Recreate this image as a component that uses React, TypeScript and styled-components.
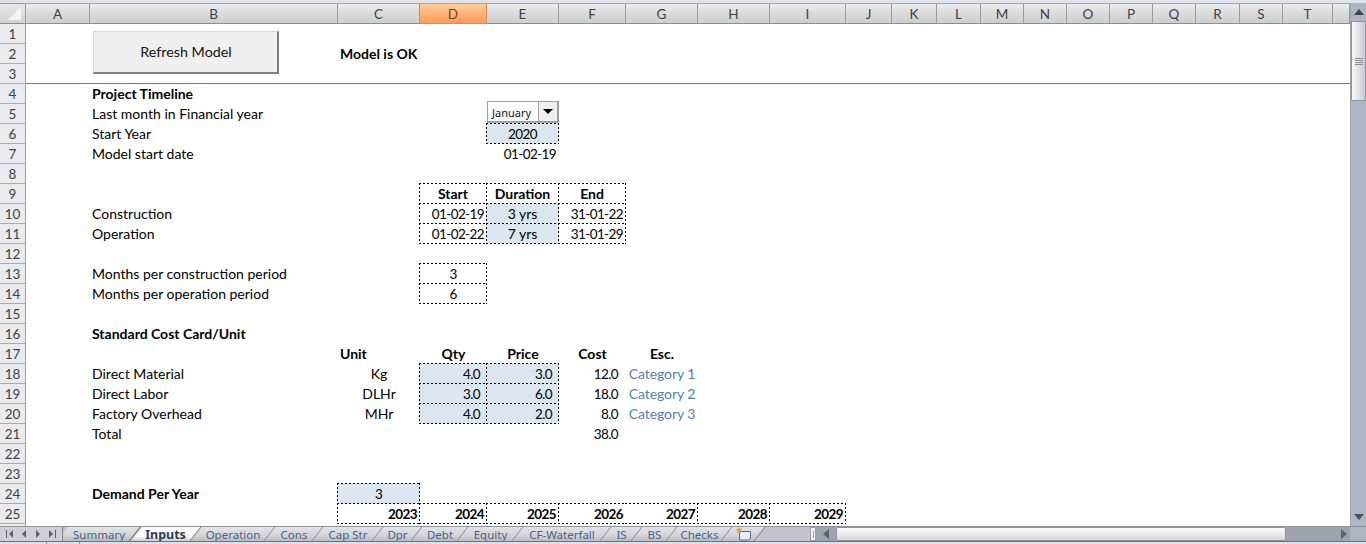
import React from "react";
import styled, { createGlobalStyle, css } from "styled-components";

const Global = createGlobalStyle`
  html, body { margin: 0; padding: 0; background: #fff; overflow: hidden; }
  * { box-sizing: border-box; }
`;

const FONT = `Lato, "Noto Sans", "Liberation Sans", sans-serif`;
const UI_FONT = `"Noto Sans", "Liberation Sans", sans-serif`;

const Window = styled.div`
  width: 1366px;
  height: 544px;
  display: flex;
  flex-direction: column;
  overflow: hidden;
  font-family: ${FONT};
  background: #fff;
`;
const TopBand = styled.div`
  flex: 0 0 3px;
  background: #dfe3ee;
`;
const Main = styled.div`
  flex: 0 0 523px;
  display: flex;
`;
const Sheet = styled.div`
  flex: 0 0 1350px;
  height: 523px;
  overflow: hidden;
  display: grid;
  grid-template-columns: 26px 64px 248px 82px 67px 72px 67px 72px 72px 76px 46px 45px 44px 43px 43px 43px 43px 43px 44px 43px 50px 17px;
  grid-template-rows: 21px repeat(26, 20px);
`;
const Corner = styled.div`
  grid-column: 1;
  grid-row: 1;
  display: flex;
  align-items: flex-end;
  justify-content: flex-end;
  padding: 0 4px 3px 0;
  background: linear-gradient(#e6e8ea, #d0d2d4);
  border-top: 1px solid #9a9c9e;
  border-right: 1px solid #9a9c9e;
  border-bottom: 1px solid #8a8c8e;
`;
const ColHead = styled.div<{ $c: number; $on?: boolean }>`
  grid-column: ${(p) => p.$c};
  grid-row: 1;
  display: flex;
  align-items: center;
  justify-content: center;
  font-size: 13.5px;
  padding-top: 1px;
  color: ${(p) => (p.$on ? "#6b4a2a" : "#3d4245")};
  background: ${(p) =>
    p.$on
      ? "linear-gradient(#ffcf9c, #fdb47a 50%, #fb9a55)"
      : "linear-gradient(#eceeee, #d9dbdb 50%, #ccd0d0)"};
  border-top: 1px solid #a2a4a6;
  border-right: 1px solid ${(p) => (p.$on ? "#e88a3f" : "#9a9c9e")};
  border-bottom: 1px solid ${(p) => (p.$on ? "#e88a3f" : "#8a8c8e")};
`;
const RowHead = styled.div<{ $r: number }>`
  grid-column: 1;
  grid-row: ${(p) => p.$r + 1};
  display: flex;
  align-items: center;
  justify-content: center;
  font-size: 13.5px;
  color: #3d4245;
  background: #e9ebee;
  border-right: 1px solid #9a9c9e;
  border-bottom: 1px solid #a8aaac;
`;
const Rule = styled.div`
  grid-column: 2 / -1;
  grid-row: 4;
  border-bottom: 1px solid #7a7a7a;
  height: 20px;
`;

const hLine = "repeating-linear-gradient(90deg, #000 0 2px, transparent 2px 4px)";
const vLine = "repeating-linear-gradient(180deg, #000 0 2px, transparent 2px 4px)";

const dottedBox = (open?: "left" | "right") => {
  const images = [hLine, hLine];
  const sizes = ["100% 1px", "100% 1px"];
  const places = ["left top", "left bottom"];
  if (open !== "left") {
    images.push(vLine);
    sizes.push("1px 100%");
    places.push("left top");
  }
  if (open !== "right") {
    images.push(vLine);
    sizes.push("1px 100%");
    places.push("right top");
  }
  return css`
    margin: -1px 0 0 -1px;
    height: 21px;
    background-image: ${images.join(", ")};
    background-size: ${sizes.join(", ")};
    background-position: ${places.join(", ")};
    background-repeat: no-repeat;
  `;
};

const lineHeight = (box?: boolean, num?: boolean) => (num ? (box ? 23 : 21) : box ? 21 : 20);
const rightPad = (box?: boolean, inset?: boolean) => (inset ? (box ? 7 : 8) : 3);

const Cell = styled.div<{
  $c: number;
  $r: number;
  $align?: "left" | "center" | "right";
  $bold?: boolean;
  $fill?: boolean;
  $box?: boolean;
  $open?: "left" | "right";
  $link?: boolean;
  $num?: boolean;
  $inset?: boolean;
}>`
  grid-column: ${(p) => p.$c};
  grid-row: ${(p) => p.$r + 1};
  font-size: ${(p) => (p.$num ? 13.5 : 14)}px;
  letter-spacing: ${(p) => (p.$num ? "-0.6px" : p.$link ? "-0.1px" : "0")};
  line-height: ${(p) => lineHeight(p.$box, p.$num)}px;
  white-space: nowrap;
  text-align: ${(p) => p.$align || "left"};
  font-weight: ${(p) => (p.$bold ? 700 : 400)};
  color: ${(p) => (p.$link ? "#4f81bd" : "#000")};
  background-color: ${(p) => (p.$fill ? "#dce6f1" : "transparent")};
  padding: ${(p) =>
    p.$align === "right"
      ? `0 ${rightPad(p.$box, p.$inset)}px 0 0`
      : p.$align === "center"
        ? "0"
        : "0 0 0 2px"};
  min-width: 0;
  ${(p) => p.$box && dottedBox(p.$open)}
`;
const RefreshButton = styled.div`
  grid-column: 3;
  grid-row: 2 / 5;
  align-self: start;
  justify-self: start;
  margin: 7px 0 0 3px;
  width: 186px;
  height: 43px;
  display: flex;
  align-items: center;
  justify-content: center;
  padding: 0 0 2px 1px;
  font-size: 14.3px;
  color: #111;
  background: #f0f0f0;
  border-top: 1px solid #d8d8d8;
  border-left: 1px solid #d8d8d8;
  border-right: 2px solid #7f7f7f;
  border-bottom: 2px solid #7f7f7f;
`;
const Dropdown = styled.div`
  grid-column: 6;
  grid-row: 6;
  margin: -3px 0 0 0;
  height: 22px;
  display: flex;
  align-items: stretch;
  background: #fff;
  border-style: solid;
  border-color: #a0a0a0;
  border-width: 1px 2px 2px 1px;
`;
const DropLabel = styled.div`
  flex: 1;
  font-family: ${UI_FONT};
  font-size: 11px;
  line-height: 21px;
  padding-left: 4px;
  color: #111;
`;
const DropButton = styled.div`
  flex: 0 0 19px;
  display: flex;
  align-items: center;
  justify-content: center;
  background: #efefef;
  border-left: 1px solid #a0a0a0;
`;

const VScroll = styled.div`
  flex: 0 0 16px;
  height: 523px;
  background: #afb4c4;
  border-left: 1px solid #9fa4b2;
  display: flex;
  flex-direction: column;
  align-items: stretch;
`;
const ArrowBox = styled.div<{ $h: number }>`
  flex: 0 0 ${(p) => p.$h}px;
  display: flex;
  align-items: center;
  justify-content: center;
`;
const VThumb = styled.div`
  flex: 0 0 80px;
  display: flex;
  flex-direction: column;
  align-items: center;
  justify-content: center;
  gap: 1px;
  border: 1px solid #8e93a0;
  border-radius: 1px;
  background: linear-gradient(90deg, #f7f7f8, #e2e3e6 50%, #c9cbd0);
`;
const Grip = styled.span`
  display: block;
  width: 8px;
  height: 1px;
  background: #8a8d94;
`;
const VTrack = styled.div`
  flex: 1;
`;

const Bottom = styled.div`
  flex: 0 0 18px;
  display: flex;
  flex-direction: column;
  background: #afb4c4;
`;
const BarRow = styled.div`
  flex: 0 0 15px;
  display: flex;
  align-items: stretch;
  background: #c2c5cd;
  border-top: 1px solid #8f939c;
`;
const Nav = styled.div`
  flex: 0 0 63px;
  display: flex;
  align-items: center;
  justify-content: space-around;
  padding: 0 3px;
  position: relative;
  z-index: 3;
  background: #cfd1d6;
  border-right: 1px solid #80848c;
`;
const Tabs = styled.div`
  flex: 0 0 745px;
  display: flex;
  overflow: hidden;
  position: relative;
`;
const Tab = styled.div<{ $w: number; $on?: boolean }>`
  flex: 0 0 ${(p) => p.$w}px;
  position: relative;
  display: flex;
  align-items: center;
  justify-content: center;
  height: 14px;
  font-family: ${UI_FONT};
  font-size: ${(p) => (p.$on ? 12.5 : 11.5)}px;
  font-weight: ${(p) => (p.$on ? 700 : 400)};
  color: ${(p) => (p.$on ? "#2e3b50" : "#4a6284")};
  z-index: ${(p) => (p.$on ? 2 : 1)};
  &::before {
    content: "";
    position: absolute;
    inset: 0;
    z-index: -1;
    transform: skewX(-38deg);
    background: ${(p) =>
      p.$on
        ? "linear-gradient(#ffffff, #f6f7f8 70%, #c9ccd2)"
        : "linear-gradient(#e2e4e8, #d2d4da 60%, #b9bcc4)"};
    border-right: 1px solid #7d828c;
    border-left: 1px solid ${(p) => (p.$on ? "#7d828c" : "transparent")};
  }
`;
const HSplit = styled.div`
  flex: 0 0 6px;
  margin-left: 2px;
  display: flex;
  align-items: center;
  justify-content: center;
  background: #f2f3f5;
  border: 1px solid #9a9da5;
`;
const HSplitBar = styled.span`
  display: block;
  width: 1px;
  height: 7px;
  background: #9a9da5;
`;
const HLeft = styled.div`
  flex: 0 0 20px;
  display: flex;
  align-items: center;
  justify-content: center;
  background: #9fa3ad;
`;
const HThumb = styled.div`
  flex: 0 0 450px;
  background: linear-gradient(#fafafb, #eceded 50%, #d4d6da);
  border: 1px solid #8e929c;
  border-radius: 2px;
`;
const HTrack = styled.div`
  flex: 0 0 64px;
  display: flex;
  align-items: center;
  justify-content: flex-end;
  padding-right: 3px;
  background: #9fa3ad;
`;
const VEnd = styled.div`
  flex: 1;
  background: #afb4c4;
`;
const StatusRow = styled.div`
  flex: 0 0 3px;
  display: flex;
  background: #dfe1e6;
  border-top: 1px solid #6f7379;
`;
const StatusSeg = styled.div<{ $w: number }>`
  flex: 0 0 ${(p) => p.$w}px;
  border-right: 1px solid #8f939c;
`;

const Tri = ({ d, w = 8, h = 6, fill = "#3c4048" }: { d: string; w?: number; h?: number; fill?: string }) => (
  <svg width={w} height={h} viewBox={`0 0 ${w} ${h}`}>
    <path d={d} fill={fill} />
  </svg>
);

const NavIcon = ({ kind }: { kind: "first" | "prev" | "next" | "last" }) => {
  const paths = {
    first: "M0 0h1v8H0zM7 0v8L3 4z",
    prev: "M6 0v8L2 4z",
    next: "M2 0v8l4-4z",
    last: "M7 0h1v8H7zM1 0v8l4-4z",
  };
  return (
    <svg width="8" height="8" viewBox="0 0 8 8">
      <path d={paths[kind]} fill="#5a6070" />
    </svg>
  );
};

const NewSheetIcon = () => (
  <svg width="17" height="14" viewBox="0 0 17 14">
    <path d="M4.5 4.5h11v6.5l-2 2h-9z" fill="#e6eef8" stroke="#4f6f9c" />
    <path d="M4 0.5l.8 1.7 1.8-.5-.7 1.8 1.4 1.2-1.9.2-.4 1.8-1-1.6-1.8.5.7-1.7L1.5 2.2l1.9-.1z" fill="#f0a020" stroke="#c87810" strokeWidth=".4" />
  </svg>
);

const columns = ["A","B","C","D","E","F","G","H","I","J","K","L","M","N","O","P","Q","R","S","T",""];

type C = {
  t: string; c: number; r: number;
  a?: "left" | "center" | "right"; b?: boolean; f?: boolean; x?: boolean; o?: "left" | "right"; l?: boolean; i?: boolean;
};
const B = 3, CC = 4, D = 5, E = 6, F = 7, G = 8, H = 9, I = 10;

const cells: C[] = [
  { t: "Model is OK", c: CC, r: 2, b: true },
  { t: "Project Timeline", c: B, r: 4, b: true },
  { t: "Last month in Financial year", c: B, r: 5 },
  { t: "Start Year", c: B, r: 6 },
  { t: "2020", c: E, r: 6, a: "center", f: true, x: true },
  { t: "Model start date", c: B, r: 7 },
  { t: "01-02-19", c: E, r: 7, a: "right" },
  { t: "Start", c: D, r: 9, a: "center", b: true, x: true },
  { t: "Duration", c: E, r: 9, a: "center", b: true, x: true },
  { t: "End", c: F, r: 9, a: "center", b: true, x: true },
  { t: "Construction", c: B, r: 10 },
  { t: "01-02-19", c: D, r: 10, a: "right", x: true },
  { t: "3 yrs", c: E, r: 10, a: "center", f: true, x: true },
  { t: "31-01-22", c: F, r: 10, a: "right", x: true },
  { t: "Operation", c: B, r: 11 },
  { t: "01-02-22", c: D, r: 11, a: "right", x: true },
  { t: "7 yrs", c: E, r: 11, a: "center", f: true, x: true },
  { t: "31-01-29", c: F, r: 11, a: "right", x: true },
  { t: "Months per construction period", c: B, r: 13 },
  { t: "3", c: D, r: 13, a: "center", x: true },
  { t: "Months per operation period", c: B, r: 14 },
  { t: "6", c: D, r: 14, a: "center", x: true },
  { t: "Standard Cost Card/Unit", c: B, r: 16, b: true },
  { t: "Unit", c: CC, r: 17, b: true },
  { t: "Qty", c: D, r: 17, a: "center", b: true },
  { t: "Price", c: E, r: 17, a: "center", b: true },
  { t: "Cost", c: F, r: 17, a: "center", b: true },
  { t: "Esc.", c: G, r: 17, a: "center", b: true },
  { t: "Direct Material", c: B, r: 18 },
  { t: "Kg", c: CC, r: 18, a: "center" },
  { t: "4.0", c: D, r: 18, a: "right", f: true, x: true, i: true },
  { t: "3.0", c: E, r: 18, a: "right", f: true, x: true, i: true },
  { t: "12.0", c: F, r: 18, a: "right", i: true },
  { t: "Category 1", c: G, r: 18, l: true, a: "center" },
  { t: "Direct Labor", c: B, r: 19 },
  { t: "DLHr", c: CC, r: 19, a: "center" },
  { t: "3.0", c: D, r: 19, a: "right", f: true, x: true, i: true },
  { t: "6.0", c: E, r: 19, a: "right", f: true, x: true, i: true },
  { t: "18.0", c: F, r: 19, a: "right", i: true },
  { t: "Category 2", c: G, r: 19, l: true, a: "center" },
  { t: "Factory Overhead", c: B, r: 20 },
  { t: "MHr", c: CC, r: 20, a: "center" },
  { t: "4.0", c: D, r: 20, a: "right", f: true, x: true, i: true },
  { t: "2.0", c: E, r: 20, a: "right", f: true, x: true, i: true },
  { t: "8.0", c: F, r: 20, a: "right", i: true },
  { t: "Category 3", c: G, r: 20, l: true, a: "center" },
  { t: "Total", c: B, r: 21 },
  { t: "38.0", c: F, r: 21, a: "right", i: true },
  { t: "Demand Per Year", c: B, r: 24, b: true },
  { t: "3", c: CC, r: 24, a: "center", f: true, x: true },
  { t: "2023", c: CC, r: 25, a: "right", b: true, x: true },
  { t: "2024", c: D, r: 25, a: "right", b: true, x: true },
  { t: "2025", c: E, r: 25, a: "right", b: true, x: true },
  { t: "2026", c: F, r: 25, a: "right", b: true, x: true, o: "right" },
  { t: "2027", c: G, r: 25, a: "right", b: true, x: true, o: "left" },
  { t: "2028", c: H, r: 25, a: "right", b: true, x: true },
  { t: "2029", c: I, r: 25, a: "right", b: true, x: true },
];

const tabs: { t: string; w: number; on?: boolean }[] = [
  { t: "Summary", w: 72 },
  { t: "Inputs", w: 61, on: true },
  { t: "Operation", w: 74 },
  { t: "Cons", w: 48 },
  { t: "Cap Str", w: 60 },
  { t: "Dpr", w: 39 },
  { t: "Debt", w: 46 },
  { t: "Equity", w: 55 },
  { t: "CF-Waterfall", w: 88 },
  { t: "IS", w: 31 },
  { t: "BS", w: 35 },
  { t: "Checks", w: 55 },
];

export default function App() {
  return (
    <Window>
      <Global />
      <TopBand />
      <Main>
        <Sheet>
          <Corner>
            <Tri d="M13 0v13H0z" w={13} h={13} fill="#f4f5f5" />
          </Corner>
          {columns.map((name, i) => (
            <ColHead key={i} $c={i + 2} $on={name === "D"}>{name}</ColHead>
          ))}
          {Array.from({ length: 26 }, (_, i) => (
            <RowHead key={i} $r={i + 1}>{i < 25 ? i + 1 : ""}</RowHead>
          ))}
          <Rule />
          <RefreshButton>Refresh Model</RefreshButton>
          <Dropdown>
            <DropLabel>January</DropLabel>
            <DropButton>
              <Tri d="M0 0h10L5 5z" w={10} h={5} fill="#000" />
            </DropButton>
          </Dropdown>
          {cells.map((k, i) => (
            <Cell
              key={i}
              $c={k.c}
              $r={k.r}
              $align={k.a}
              $bold={k.b}
              $fill={k.f}
              $box={k.x}
              $open={k.o}
              $link={k.l}
              $inset={k.i}
              $num={/^[\d.\-]+$/.test(k.t)}
            >
              {k.t}
            </Cell>
          ))}
        </Sheet>
        <VScroll>
          <ArrowBox $h={18}>
            <Tri d="M5 0l5 6H0z" w={10} h={6} fill="#3f4450" />
          </ArrowBox>
          <VThumb>
            <Grip /><Grip /><Grip /><Grip />
          </VThumb>
          <VTrack />
          <ArrowBox $h={18}>
            <Tri d="M0 0h10L5 6z" w={10} h={6} fill="#4a4f5c" />
          </ArrowBox>
        </VScroll>
      </Main>
      <Bottom>
        <BarRow>
          <Nav>
            <NavIcon kind="first" />
            <NavIcon kind="prev" />
            <NavIcon kind="next" />
            <NavIcon kind="last" />
          </Nav>
          <Tabs>
            {tabs.map((t) => (
              <Tab key={t.t} $w={t.w} $on={t.on}>{t.t}</Tab>
            ))}
            <Tab $w={33}><NewSheetIcon /></Tab>
          </Tabs>
          <HSplit><HSplitBar /></HSplit>
          <HLeft>
            <Tri d="M6 0v10L0 5z" w={6} h={10} fill="#5c616c" />
          </HLeft>
          <HThumb />
          <HTrack>
            <Tri d="M0 0v10l6-5z" w={6} h={10} fill="#5c616c" />
          </HTrack>
          <VEnd />
        </BarRow>
        <StatusRow>
          <StatusSeg $w={47} />
          <StatusSeg $w={33} />
        </StatusRow>
      </Bottom>
    </Window>
  );
}
